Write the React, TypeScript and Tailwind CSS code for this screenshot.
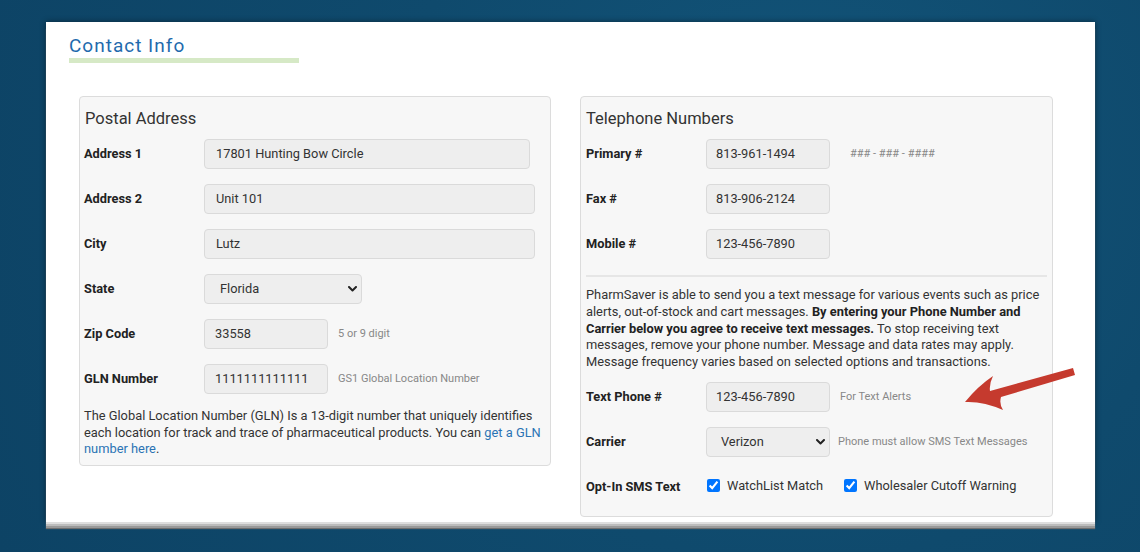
import React from "react";

function Chevron() {
  return (
    <svg width="9" height="6" viewBox="0 0 9 6" className="block">
      <polyline points="1,1 4.5,4.5 8,1" fill="none" stroke="#222" strokeWidth="2" strokeLinecap="round" strokeLinejoin="round" />
    </svg>
  );
}

function Input({ value, w, pl = "pl-[10px]" }: { value: string; w: string; pl?: string }) {
  return (
    <div className={`${w} ${pl} h-[30px] flex items-center rounded-[4px] border border-[#dadada] bg-[#eeeeee] text-[12.8px] text-[#333]`}>
      {value}
    </div>
  );
}

function Select({ value, w, pl }: { value: string; w: string; pl: string }) {
  return (
    <div className={`${w} ${pl} h-[30px] flex items-center justify-between pr-[4px] rounded-[4px] border border-[#dadada] bg-[#eeeeee] text-[12.8px] text-[#333]`}>
      <span>{value}</span>
      <Chevron />
    </div>
  );
}

function Row({ label, children }: { label: string; children: React.ReactNode }) {
  return (
    <div className="flex items-center h-[30px]">
      <div className="w-[120px] shrink-0 text-[12.8px] font-bold text-[#222]">{label}</div>
      {children}
    </div>
  );
}

function Hint({ children, ml }: { children: React.ReactNode; ml: string }) {
  return <span className={`${ml} text-[11px] text-[#888]`}>{children}</span>;
}

export default function App() {
  return (
    <div className="relative w-[1140px] h-[552px] overflow-hidden bg-[#0f4a6d] bg-[radial-gradient(circle_at_70%_30%,#125479_0%,#0f4a6d_45%,#0d4365_100%)] pt-[22px] pl-[46px] font-['Roboto',sans-serif]">
      <div className="w-[1049px] h-[500px] bg-white pt-[13px] pl-[23px] shadow-[0_2px_0_#dedede,0_4px_0_#bcbcbc,0_6px_0_#999,0_7px_1px_#6f6f6f,0_0_6px_rgba(0,0,0,0.45)]">
        <h1 className="text-[19px] leading-[22px] tracking-[1px] text-[#1e6aad] font-normal">Contact Info</h1>
        <div className="mt-[1px] h-[5px] w-[230px] bg-[#d6e9c6]" />

        <div className="mt-[33px] ml-[10px] flex items-start gap-[29px]">
          {/* Postal Address */}
          <div className="w-[472px] rounded-[4px] border border-[#dcdcdc] bg-[#f7f7f7] pt-[11px] pl-[4px] pr-[1px] pb-[7px]">
            <h2 className="pl-[1px] text-[16.5px] leading-[22px] text-[#333] font-normal mb-[9px]">Postal Address</h2>
            <div className="flex flex-col gap-[15px]">
              <Row label="Address 1">
                <Input value="17801 Hunting Bow Circle" w="w-[326px]" pl="pl-[11px]" />
              </Row>
              <Row label="Address 2">
                <Input value="Unit 101" w="w-[331px]" pl="pl-[11px]" />
              </Row>
              <Row label="City">
                <Input value="Lutz" w="w-[331px]" pl="pl-[11px]" />
              </Row>
              <Row label="State">
                <Select value="Florida" w="w-[158px]" pl="pl-[15px]" />
              </Row>
              <Row label="Zip Code">
                <Input value="33558" w="w-[124px]" />
                <Hint ml="ml-[10px]">5 or 9 digit</Hint>
              </Row>
              <Row label="GLN Number">
                <Input value="1111111111111" w="w-[124px]" />
                <Hint ml="ml-[10px]">GS1 Global Location Number</Hint>
              </Row>
            </div>
            <p className="mt-[14px] text-[12.85px] leading-[16.7px] text-[#333]">
              The Global Location Number (GLN) Is a 13-digit number that uniquely identifies each location for track and
              trace of pharmaceutical products. You can <span className="text-[#2a73b4]">get a GLN number here</span>.
            </p>
          </div>

          {/* Telephone Numbers */}
          <div className="w-[473px] rounded-[4px] border border-[#dcdcdc] bg-[#f7f7f7] pt-[11px] pl-[5px] pr-[5px] pb-[14px]">
            <h2 className="text-[16.5px] leading-[22px] text-[#333] font-normal mb-[9px]">Telephone Numbers</h2>
            <div className="flex flex-col gap-[15px]">
              <Row label="Primary #">
                <Input value="813-961-1494" w="w-[124px]" pl="pl-[9px]" />
                <Hint ml="ml-[20px]">### - ### - ####</Hint>
              </Row>
              <Row label="Fax #">
                <Input value="813-906-2124" w="w-[124px]" pl="pl-[9px]" />
              </Row>
              <Row label="Mobile #">
                <Input value="123-456-7890" w="w-[124px]" pl="pl-[9px]" />
              </Row>
            </div>
            <div className="mt-[16px] h-[2px] bg-[#e6e6e6]" />
            <p className="mt-[10px] pr-[1px] text-[12.85px] leading-[16.75px] text-[#333]">
              PharmSaver is able to send you a text message for various events such as price alerts, out-of-stock and cart
              messages. <b className="font-bold text-[#222]">By entering your Phone Number and Carrier below you agree to receive text messages.</b> To
              stop receiving text messages, remove your phone number. Message and data rates may apply. Message frequency
              varies based on selected options and transactions.
            </p>
            <div className="mt-[11px] flex flex-col gap-[15px]">
              <Row label="Text Phone #">
                <Input value="123-456-7890" w="w-[124px]" pl="pl-[9px]" />
                <Hint ml="ml-[10px]">For Text Alerts</Hint>
              </Row>
              <Row label="Carrier">
                <Select value="Verizon" w="w-[124px]" pl="pl-[14px]" />
                <Hint ml="ml-[8px]">Phone must allow SMS Text Messages</Hint>
              </Row>
              <Row label="Opt-In SMS Text">
                <label className="flex items-center ml-[1px] -mt-[2px]">
                  <input type="checkbox" checked readOnly className="m-0 w-[13px] h-[13px] accent-[#0075ff]" />
                  <span className="ml-[7px] text-[12.8px] text-[#333]">WatchList Match</span>
                </label>
                <label className="flex items-center ml-[21px] -mt-[2px]">
                  <input type="checkbox" checked readOnly className="m-0 w-[13px] h-[13px] accent-[#0075ff]" />
                  <span className="ml-[7px] text-[12.8px] text-[#333]">Wholesaler Cutoff Warning</span>
                </label>
              </Row>
            </div>
          </div>
        </div>
      </div>

      {/* annotation arrow */}
      <svg className="absolute left-0 top-0 pointer-events-none" width="1140" height="552" viewBox="0 0 1140 552">
        <path
          d="M965 402 Q978 386 993 376 Q989 384 990 391 L1073 368 L1075 375 L1001 397 Q999 404 1003 410 Q983 401 965 402 Z"
          fill="#c53a2e"
        />
      </svg>
    </div>
  );
}
